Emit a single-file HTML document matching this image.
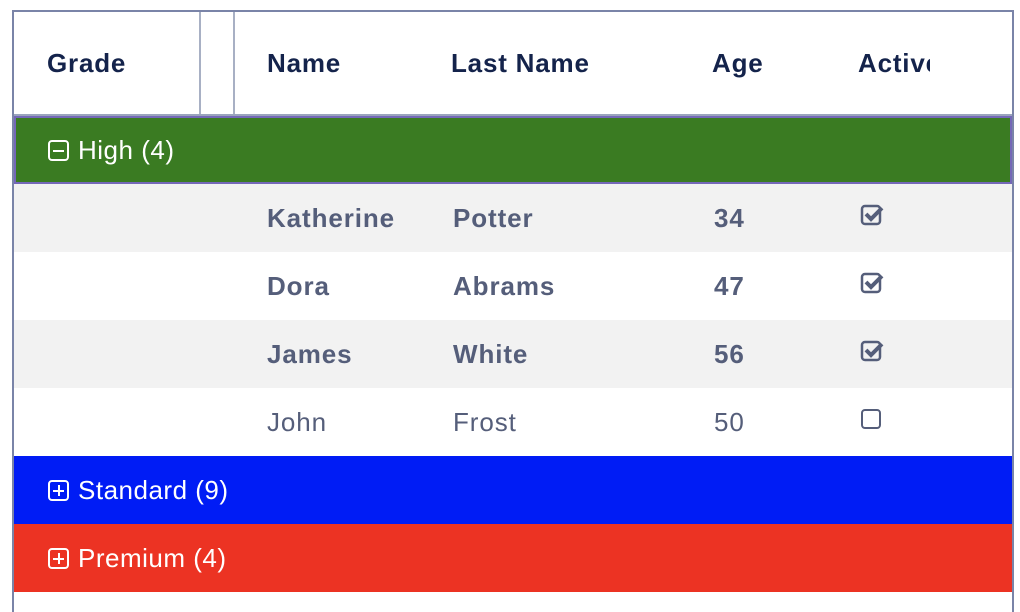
<!DOCTYPE html><html><head><style>
html,body{margin:0;width:1020px;height:592px;overflow:hidden;background:#fff;font-family:"Liberation Sans",sans-serif}
.g{position:absolute;left:12px;top:10px;width:998px;height:600px;border:2px solid #7a84a8;border-bottom:none;overflow:hidden}
.h{position:absolute;top:0;height:102px;left:0;right:0;border-bottom:2px solid #9aa4bd}
.h span{position:absolute;top:36px;font-weight:bold;font-size:26px;color:#14234b;letter-spacing:0.8px;white-space:nowrap}
.sep{position:absolute;top:0;width:2px;height:102px;background:#a8b0c4}
.r{position:absolute;left:0;right:0;height:68px}
.r span{position:absolute;top:19px;font-size:26px;color:#555e7a;letter-spacing:0.9px}
.b span{font-weight:bold}
.grp span{color:#fff;left:34px;letter-spacing:0.5px}
.ic{display:inline-block;width:21px;height:21px;border:2px solid #fff;border-radius:4px;position:relative;vertical-align:-2px;margin-right:9px;box-sizing:border-box}
.ic:before{content:"";position:absolute;left:3px;right:3px;top:7.5px;height:2px;background:#fff}
.ic.p:after{content:"";position:absolute;top:3px;bottom:3px;left:7.5px;width:2px;background:#fff}
svg{position:absolute;left:846px;top:19px}
</style></head><body><div class="g">
<div class="h"><span style="left:33px">Grade</span><div class="sep" style="left:185px"></div><div class="sep" style="left:219px"></div>
<span style="left:253px">Name</span><span style="left:437px">Last Name</span><span style="left:698px">Age</span><span style="left:844px;width:72px;overflow:hidden">Active</span></div>
<div class="r grp" style="top:104px;background:#3a7b22;border:2px solid #7468b8;height:64px;left:0;right:0"><span style="top:17px;left:32px"><i class="ic"></i>High (4)</span></div>
<div class="r b" style="top:172px;background:#f2f2f2"><span style="left:253px">Katherine</span><span style="left:439px">Potter</span><span style="left:700px">34</span><svg width="26" height="26" viewBox="0 0 26 26"><rect x="2" y="3" width="18" height="18" rx="3" fill="none" stroke="#555e7a" stroke-width="2.5"/><path d="M6 11l5 5 11-11" fill="none" stroke="#555e7a" stroke-width="4"/></svg></div>
<div class="r b" style="top:240px"><span style="left:253px">Dora</span><span style="left:439px">Abrams</span><span style="left:700px">47</span><svg width="26" height="26" viewBox="0 0 26 26"><rect x="2" y="3" width="18" height="18" rx="3" fill="none" stroke="#555e7a" stroke-width="2.5"/><path d="M6 11l5 5 11-11" fill="none" stroke="#555e7a" stroke-width="4"/></svg></div>
<div class="r b" style="top:308px;background:#f2f2f2"><span style="left:253px">James</span><span style="left:439px">White</span><span style="left:700px">56</span><svg width="26" height="26" viewBox="0 0 26 26"><rect x="2" y="3" width="18" height="18" rx="3" fill="none" stroke="#555e7a" stroke-width="2.5"/><path d="M6 11l5 5 11-11" fill="none" stroke="#555e7a" stroke-width="4"/></svg></div>
<div class="r" style="top:376px"><span style="left:253px">John</span><span style="left:439px">Frost</span><span style="left:700px">50</span><svg width="26" height="26" viewBox="0 0 26 26"><rect x="2" y="3" width="18" height="18" rx="3" fill="none" stroke="#555e7a" stroke-width="2"/></svg></div>
<div class="r grp" style="top:444px;background:#001cf5"><span><i class="ic p"></i>Standard (9)</span></div>
<div class="r grp" style="top:512px;background:#ec3323"><span><i class="ic p"></i>Premium (4)</span></div>
</div></body></html>
